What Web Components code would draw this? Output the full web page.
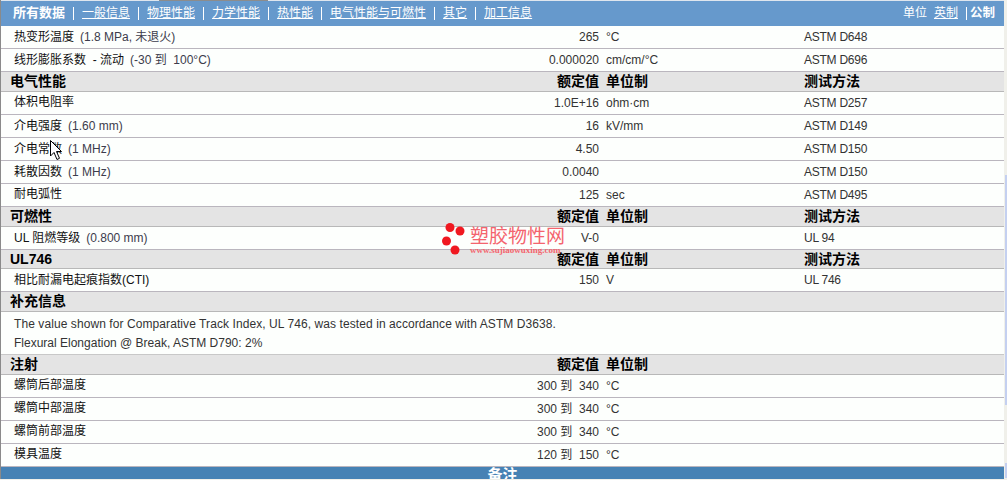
<!DOCTYPE html>
<html>
<head>
<meta charset="utf-8">
<style>
    html, body { margin: 0; padding: 0; background: #f0f0ea; overflow: hidden; }
    body { font: 12px/14px "Liberation Sans", "Noto Sans CJK SC", sans-serif; color: #222; height: 480px; position: relative; }
</style>
</head>
<body>
<data-sheet>
    <top-edge></top-edge>
    <tab-bar></tab-bar>
    <prop-row label="热变形温度" cond="(1.8 MPa, 未退火)" value="265" unit="°C" method="ASTM D648"></prop-row>
    <prop-row label="线形膨胀系数 &nbsp;- 流动" cond="(-30 到 &nbsp;100°C)" value="0.000020" unit="cm/cm/°C" method="ASTM D696"></prop-row>
    <section-row title="电气性能"></section-row>
    <prop-row label="体积电阻率" value="1.0E+16" unit="ohm·cm" method="ASTM D257" low></prop-row>
    <prop-row label="介电强度" cond="(1.60 mm)" value="16" unit="kV/mm" method="ASTM D149"></prop-row>
    <prop-row label="介电常数" cond="(1 MHz)" value="4.50" method="ASTM D150"></prop-row>
    <prop-row label="耗散因数" cond="(1 MHz)" value="0.0040" method="ASTM D150"></prop-row>
    <prop-row label="耐电弧性" value="125" unit="sec" method="ASTM D495" low></prop-row>
    <section-row title="可燃性"></section-row>
    <prop-row label="UL 阻燃等级" cond="(0.800 mm)" value="V-0" method="UL 94"></prop-row>
    <section-row title="UL746" style="height: 19px; padding-bottom: 1px"></section-row>
    <prop-row label="相比耐漏电起痕指数(CTI)" value="150" unit="V" method="UL 746"></prop-row>
    <section-row title="补充信息" plain></section-row>
    <note-block>
        <span style="letter-spacing: .08px">The value shown for Comparative Track Index, UL 746, was tested in accordance with ASTM D3638.</span>
        <span>Flexural Elongation @ Break, ASTM D790: 2%</span>
    </note-block>
    <section-row title="注射" nomethod></section-row>
    <prop-row label="螺筒后部温度" value="300 到 &nbsp;340" unit="°C" low></prop-row>
    <prop-row label="螺筒中部温度" value="300 到 &nbsp;340" unit="°C" low></prop-row>
    <prop-row label="螺筒前部温度" value="300 到 &nbsp;340" unit="°C" low></prop-row>
    <prop-row label="模具温度" value="120 到 &nbsp;150" unit="°C" low></prop-row>
    <foot-bar>备注</foot-bar>
</data-sheet>
<site-mark></site-mark>
<mouse-arrow></mouse-arrow>
<scroll-mark></scroll-mark>

<script>
    const GRID = 'grid-template-columns: 600px 203px 1fr;';

    class DataSheet extends HTMLElement {
        constructor() {
            super();
            this.attachShadow({mode: 'open'}).innerHTML = `
                <style>
                    :host { display: flex; flex-direction: column; width: 1004px; height: 479px; overflow: hidden;
                            background: #fdfffd; box-sizing: border-box; border-left: 1px solid #8a8a8a; }
                </style>
                <slot></slot>`;
        }
    }

    // one pixel line above the tab bar, with a leftover grey piece
    class TopEdge extends HTMLElement {
        constructor() {
            super();
            this.attachShadow({mode: 'open'}).innerHTML = `
                <style>
                    :host { display: block; height: 1px; flex: none; background: #dfe6ee; padding-left: 158px; }
                    div { width: 109px; height: 1px; background: #8c8c8c; }
                </style>
                <div></div>`;
        }
    }

    class TabBar extends HTMLElement {
        constructor() {
            super();
            const tabs = ['一般信息', '物理性能', '力学性能', '热性能', '电气性能与可燃性', '其它', '加工信息'];
            this.attachShadow({mode: 'open'}).innerHTML = `
                <style>
                    :host { display: flex; align-items: center; justify-content: space-between; height: 25px; flex: none;
                            background: #6699cc; color: #fff; padding: 0 9px 1px 12px; box-sizing: border-box; }
                    nav, .units { display: flex; align-items: center; }
                    b { font-weight: bold; font-size: 13px; }
                    .units b { font-size: 12.5px; }
                    a { color: #fff; text-decoration: underline; }
                    .sep { width: 1px; height: 13px; background: #fff; margin: 0 8px; }
                    .units a { margin: 0 8px 0 7px; }
                    .units .sep { margin: 0 3px 0 0; }
                </style>
                <nav>
                    <b>所有数据</b>
                    ${tabs.map(t => `<span class="sep"></span><a>${t}</a>`).join('')}
                </nav>
                <div class="units">单位 <a>英制</a><span class="sep"></span><b>公制</b></div>`;
        }
    }

    class PropRow extends HTMLElement {
        constructor() {
            super();
            this.attachShadow({mode: 'open'}).innerHTML = `
                <style>
                    :host { display: grid; ${GRID} height: 23px; flex: none; box-sizing: border-box;
                            border-bottom: 1px solid #bab6be; align-items: center; }
                    .label { display: flex; justify-content: space-between; align-items: center; padding-left: 13px; }
                    .left { display: flex; color: #111; }
                    :host([low]) .left { padding-bottom: 2px; }
                    .cond { margin-left: 6px; color: #3c3c4c; }
                    .value { color: #333; margin-left: auto; padding-right: 2px; }
                    .unit { color: #333; padding-left: 5px; }
                    .method { color: #333; letter-spacing: -.25px; }
                </style>
                <div class="label"><div class="left"><span class="name"></span><span class="cond"></span></div><span class="value"></span></div>
                <div class="unit"></div>
                <div class="method"></div>`;
        }

        connectedCallback() {
            const s = this.shadowRoot;
            s.querySelector('.name').innerHTML = this.getAttribute('label') || '';
            s.querySelector('.cond').innerHTML = this.getAttribute('cond') || '';
            s.querySelector('.value').innerHTML = this.getAttribute('value') || '';
            s.querySelector('.unit').innerHTML = this.getAttribute('unit') || '';
            s.querySelector('.method').innerHTML = this.getAttribute('method') || '';
        }
    }

    class SectionRow extends HTMLElement {
        constructor() {
            super();
            this.attachShadow({mode: 'open'}).innerHTML = `
                <style>
                    :host { display: grid; ${GRID} height: 20px; flex: none; box-sizing: border-box; padding-bottom: 2px;
                            background: #e4e4e4; border-bottom: 1px solid #b8b8b8; font-weight: bold; font-size: 14px;
                            color: #000; align-items: center; }
                    .first { display: flex; justify-content: space-between; padding-left: 9px; }
                    .rated { padding-right: 2px; }
                    .unit { padding-left: 5px; }
                </style>
                <div class="first"><span class="title"></span><span class="rated">额定值</span></div>
                <div class="unit">单位制</div>
                <div class="method">测试方法</div>`;
        }

        connectedCallback() {
            const s = this.shadowRoot;
            s.querySelector('.title').textContent = this.getAttribute('title');
            if (this.hasAttribute('plain')) {
                s.querySelector('.rated').remove();
                s.querySelector('.unit').remove();
                s.querySelector('.method').remove();
            }
            if (this.hasAttribute('nomethod')) {
                s.querySelector('.method').remove();
            }
        }
    }

    class NoteBlock extends HTMLElement {
        constructor() {
            super();
            this.attachShadow({mode: 'open'}).innerHTML = `
                <style>
                    :host { display: flex; flex-direction: column; gap: 5px; height: 43px; flex: none; padding: 5px 0 0 13px;
                            color: #333; box-sizing: border-box; border-bottom: 1px solid #c8c8c8; }
                </style>
                <slot></slot>`;
        }
    }

    class FootBar extends HTMLElement {
        constructor() {
            super();
            this.attachShadow({mode: 'open'}).innerHTML = `
                <style>
                    :host { display: block; height: 13px; flex: none; overflow: hidden; background: #4682b4; color: #fff;
                            text-align: center; font-weight: bold; font-size: 15px; line-height: 16px; }
                </style>
                <slot></slot>`;
        }
    }

    class SiteMark extends HTMLElement {
        constructor() {
            super();
            this.attachShadow({mode: 'open'}).innerHTML = `
                <style>
                    :host { position: absolute; left: 441px; top: 222px; width: 130px; height: 36px; }
                    svg { position: absolute; left: 0; top: 0; }
                    .name { position: absolute; left: 29px; top: 4px; font-size: 19px; line-height: 22px; color: #f4646e; white-space: nowrap; }
                    .url { position: absolute; left: 29px; top: 23px; font: bold 9px "Liberation Serif", serif; color: #f4646e; white-space: nowrap; }
                </style>
                <svg width="30" height="34"><circle cx="9" cy="5.5" r="4.5" fill="#f01820"/><circle cx="19" cy="9" r="4.5" fill="#f01820"/><circle cx="5.5" cy="19" r="4.5" fill="#f01820"/><circle cx="14" cy="28" r="4.5" fill="#f01820"/></svg>
                <span class="name">塑胶物性网</span>
                <span class="url">www.sujiaowuxing.com</span>`;
        }
    }

    class MouseArrow extends HTMLElement {
        constructor() {
            super();
            this.attachShadow({mode: 'open'}).innerHTML = `
                <style>
                    :host { position: absolute; left: 50px; top: 140px; width: 14px; height: 22px; }
                </style>
                <svg width="14" height="22"><path d="M.5.5V16L4 12.5l3 7 2.5-1.2-3-6.8h5z" fill="#fff" stroke="#000"/></svg>`;
        }
    }

    // pale blue remains of the scrollbar at the right edge
    class ScrollMark extends HTMLElement {
        constructor() {
            super();
            this.attachShadow({mode: 'open'}).innerHTML = `
                <style>
                    :host { position: absolute; left: 1005px; top: 175px; width: 2px; height: 303px; display: flex;
                            flex-direction: column; justify-content: space-between; }
                    div { background: #c4d0f0; }
                    .long { height: 230px; }
                    .short { height: 15px; }
                </style>
                <div class="long"></div>
                <div class="short"></div>`;
        }
    }

    customElements.define('data-sheet', DataSheet);
    customElements.define('top-edge', TopEdge);
    customElements.define('tab-bar', TabBar);
    customElements.define('prop-row', PropRow);
    customElements.define('section-row', SectionRow);
    customElements.define('note-block', NoteBlock);
    customElements.define('foot-bar', FootBar);
    customElements.define('site-mark', SiteMark);
    customElements.define('mouse-arrow', MouseArrow);
    customElements.define('scroll-mark', ScrollMark);
</script>
</body>
</html>
